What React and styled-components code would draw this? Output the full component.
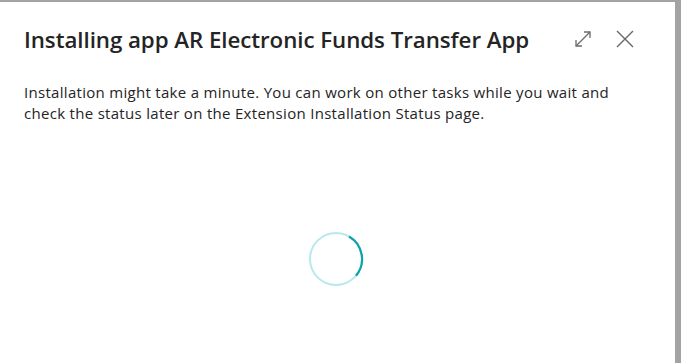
import React from "react";
import styled, { createGlobalStyle } from "styled-components";

const GlobalStyle = createGlobalStyle`
  html, body {
    margin: 0;
    padding: 0;
    background: #a3a3a3;
  }
  body {
    font-family: "Open Sans", "Noto Sans", sans-serif;
  }
`;

const Dialog = () => {
  return (
    <Page>
      <GlobalStyle />
      <Panel>
        <Header>
          <Title>Installing app AR Electronic Funds Transfer App</Title>
          <Actions>
            <IconButton aria-label="Expand">
              <svg width="20" height="20" viewBox="0 0 20 20" fill="none" stroke="#6b6b6b" strokeWidth="1.3">
                <path d="M3 17 L17 3" />
                <path d="M11 3 H17 V9" />
                <path d="M3 11 V17 H9" />
              </svg>
            </IconButton>
            <IconButton aria-label="Close">
              <svg width="20" height="20" viewBox="0 0 20 20" fill="none" stroke="#6b6b6b" strokeWidth="1.5">
                <path d="M2 2 L18 18" />
                <path d="M18 2 L2 18" />
              </svg>
            </IconButton>
          </Actions>
        </Header>
        <Message>
          Installation might take a minute. You can work on other tasks while you wait and
          check the status later on the Extension Installation Status page.
        </Message>
        <SpinnerArea>
          <svg width="56" height="56" viewBox="0 0 56 56" fill="none">
            <circle cx="28" cy="28" r="26" stroke="#b4e9ed" strokeWidth="2" />
            <path d="M 41 5.48 A 26 26 0 0 1 48 44.7" stroke="#0fa3aa" strokeWidth="2.2" />
          </svg>
        </SpinnerArea>
      </Panel>
    </Page>
  );
};

const Page = styled.div`
  padding-top: 2px;
  width: 681px;
  height: 361px;
`;

const Panel = styled.div`
  width: 675px;
  height: 361px;
  background: #ffffff;
  box-sizing: border-box;
  padding: 0 24px;
  display: flex;
  flex-direction: column;
`;

const Header = styled.div`
  display: flex;
  justify-content: space-between;
  align-items: center;
  height: 74px;
`;

const Title = styled.h1`
  margin: 0;
  font-size: 22.3px;
  font-weight: 600;
  color: #242424;
  letter-spacing: -0.05px;
`;

const Actions = styled.div`
  display: flex;
  gap: 22px;
  margin-right: 16px;
`;

const IconButton = styled.button`
  border: 0;
  background: none;
  padding: 0;
  width: 20px;
  height: 20px;
  cursor: pointer;
  display: flex;
`;

const Message = styled.p`
  margin: 6px 0 0;
  max-width: 600px;
  font-size: 15px;
  line-height: 21px;
  color: #242424;
  letter-spacing: 0.3px;
`;

const SpinnerArea = styled.div`
  display: flex;
  justify-content: center;
  padding-top: 107px;
  margin-left: -4px;
`;

export default Dialog;
